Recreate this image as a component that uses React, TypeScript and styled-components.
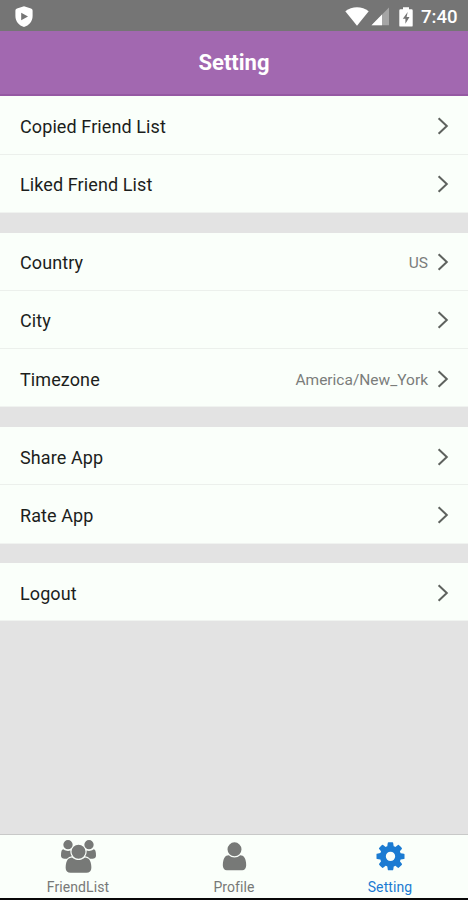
import React from "react";
import styled, { createGlobalStyle } from "styled-components";

const GlobalStyle = createGlobalStyle`
  * { box-sizing: border-box; }
  body { margin: 0; background: #e3e3e3; font-family: Roboto, "Liberation Sans", sans-serif; }
`;

const Screen = styled.div`
  display: flex;
  flex-direction: column;
  width: 468px;
  height: 900px;
  background: #e3e3e3;
  border-bottom: 2px solid #080808;
  overflow: hidden;
`;

const StatusBar = styled.div`
  display: flex;
  flex: none;
  align-items: center;
  height: 31px;
  padding: 2px 10px 0 15px;
  background: #757575;
  color: #fff;
`;

const StatusIcons = styled.div`
  display: flex;
  align-items: center;
  margin-left: auto;
`;

const Wifi = styled.svg`
  width: 24px;
  height: 19px;
`;

const Signal = styled.svg`
  width: 18px;
  height: 19px;
  margin-left: 2.5px;
`;

const Battery = styled.svg`
  width: 14px;
  height: 20px;
  margin-left: 10px;
`;

const Clock = styled.span`
  margin-left: 8px;
  width: 37px;
  font-size: 18.6px;
  line-height: 20px;
  font-weight: 500;
  white-space: nowrap;
`;

const Header = styled.header`
  display: flex;
  flex: none;
  align-items: center;
  justify-content: center;
  height: 65px;
  background: #a268b0;
  border-bottom: 2px solid #9559a3;
`;

const Title = styled.h1`
  margin: 0;
  color: #fff;
  font-size: 22px;
  line-height: 26px;
  font-weight: 700;
`;

const Content = styled.main`
  display: flex;
  flex: 1;
  flex-direction: column;
  gap: 19.7px;
  padding-top: 0.4px;
  background: linear-gradient(#fafffa 2px, #e3e3e3 2px);
`;

const Section = styled.section`
  background: #fafffa;
`;

const Row = styled.div`
  display: flex;
  align-items: center;
  height: 58.25px;
  padding: 4px 19.5px 0 20px;
  border-bottom: 1px solid #ecf0ec;
  &:last-child { border-bottom-color: #f0f3f0; }
`;

const Label = styled.span`
  flex: 1;
  color: #1c1e1c;
  font-size: 18px;
  line-height: 24px;
  letter-spacing: 0.1px;
`;

const Value = styled.span`
  margin-right: 8.5px;
  color: #7a7d7a;
  font-size: 15.5px;
  line-height: 22px;
`;

const Chevron = styled.svg`
  width: 12px;
  height: 18px;
  margin-top: -2px;
  fill: none;
  stroke: #5e625e;
  stroke-width: 2;
`;

const TabBar = styled.nav`
  display: grid;
  flex: none;
  grid-template-columns: repeat(3, 1fr);
  height: 64px;
  background: #fafffa;
  border-top: 1px solid #c8c9c8;
`;

const Tab = styled.div<{ $active?: boolean }>`
  display: flex;
  flex-direction: column;
  align-items: center;
  padding-top: 5px;
  color: ${(p) => (p.$active ? "#1b7bd2" : "#777977")};
`;

const TabIcon = styled.svg`
  width: 35px;
  height: 32.7px;
  fill: currentColor;
`;

const TabLabel = styled.span`
  margin-top: 4.8px;
  font-size: 14px;
  line-height: 20px;
  letter-spacing: 0.1px;
  color: inherit;
`;

const sections: { label: string; value?: string }[][] = [
  [{ label: "Copied Friend List" }, { label: "Liked Friend List" }],
  [
    { label: "Country", value: "US" },
    { label: "City" },
    { label: "Timezone", value: "America/New_York" },
  ],
  [{ label: "Share App" }, { label: "Rate App" }],
  [{ label: "Logout" }],
];

const tabs = [
  {
    label: "FriendList",
    viewBox: "0 0 1920 1792",
    path: "M593 896q-162 5-265 128h-134q-82 0-138-40.5t-56-118.5q0-353 124-353 6 0 43.5 21t97.5 42.5 119 21.5q67 0 133-23-5 37-5 66 0 139 81 256zm1071 637q0 120-73 189.5t-194 69.5h-874q-121 0-194-69.5t-73-189.5q0-53 3.5-103.5t14-109 26.5-108.5 43-97.5 62-81 85.5-53.5 111.5-20q10 0 43 21.5t73 48 107 48 135 21.5 135-21.5 107-48 73-48 43-21.5q61 0 111.5 20t85.5 53.5 62 81 43 97.5 26.5 108.5 14 109 3.5 103.5zm-1024-1277q0 106-75 181t-181 75-181-75-75-181 75-181 181-75 181 75 75 181zm704 384q0 159-112.5 271.5t-271.5 112.5-271.5-112.5-112.5-271.5 112.5-271.5 271.5-112.5 271.5 112.5 112.5 271.5zm576 225q0 78-56 118.5t-138 40.5h-134q-103-123-265-128 81-117 81-256 0-29-5-66 66 23 133 23 59 0 119-21.5t97.5-42.5 43.5-21q124 0 124 353zm-128-609q0 106-75 181t-181 75-181-75-75-181 75-181 181-75 181 75 75 181z",
  },
  {
    label: "Profile",
    viewBox: "0 0 1792 1792",
    path: "M1536 1399q0 109-62.5 187t-150.5 78h-854q-88 0-150.5-78t-62.5-187q0-85 8.5-160.5t31.5-152 58.5-131 94-89 134.5-34.5q131 128 313 128t313-128q76 0 134.5 34.5t94 89 58.5 131 31.5 152 8.5 160.5zm-256-887q0 159-112.5 271.5t-271.5 112.5-271.5-112.5-112.5-271.5 112.5-271.5 271.5-112.5 271.5 112.5 112.5 271.5z",
  },
  {
    label: "Setting",
    active: true,
    viewBox: "0 0 1792 1792",
    path: "M1152 896q0-106-75-181t-181-75-181 75-75 181 75 181 181 75 181-75 75-181zm512-109v222q0 12-8 23t-20 13l-185 28q-19 54-39 91 35 50 107 138 10 12 10 25t-9 23q-27 37-99 108t-94 71q-12 0-26-9l-138-108q-44 23-91 38-16 136-29 186-7 28-36 28h-222q-14 0-24.5-8.5t-11.5-21.5l-28-184q-49-16-90-37l-141 107q-10 9-25 9-14 0-25-11-126-114-165-168-7-10-7-23 0-12 8-23 15-21 51-66.5t54-70.5q-27-50-41-99l-183-27q-13-2-21-12.5t-8-23.5v-222q0-12 8-23t19-13l186-28q14-46 39-92-40-57-107-138-10-12-10-24 0-10 9-23 26-36 98.5-107.5t94.5-71.5q13 0 26 10l138 107q44-23 91-38 16-136 29-186 7-28 36-28h222q14 0 24.5 8.5t11.5 21.5l28 184q49 16 90 37l142-107q9-9 24-9 13 0 25 10 129 119 165 170 7 8 7 22 0 12-8 23-15 21-51 66.5t-54 70.5q26 50 41 98l183 28q13 2 21 12.5t8 23.5z",
  },
];

export default function App() {
  return (
    <>
      <GlobalStyle />
      <Screen>
        <StatusBar>
          <svg width="18" height="22" viewBox="0 0 18 22">
            <path
              fill="#fff"
              fillRule="evenodd"
              d="M9 0.3 L16 2.6 Q17.6 3.2 17.6 4.6 V10 C17.6 15.6 14 19.4 9 21 C4 19.4 0.4 15.6 0.4 10 V4.6 Q0.4 3.2 2 2.6 Z M6.2 6.8 V14.2 L13 10.5 Z"
            />
          </svg>
          <StatusIcons>
            <Wifi viewBox="0 0 24 19">
              <path fill="#fff" d="M0.3 4.2 C7 -1 17 -1 23.7 4.2 L12 18.7 Z" />
            </Wifi>
            <Signal viewBox="0 0 18 19">
              <path fill="#a5a5a5" d="M18 0.5 V18.3 H0.5 Z" />
              <path fill="#fff" d="M11 7.6 V18.3 H0.5 Z" />
            </Signal>
            <Battery viewBox="0 0 14 20">
              <path
                fill="#fff"
                fillRule="evenodd"
                d="M4 0.3 H10 V2.3 H12.5 Q13.7 2.3 13.7 3.5 V18.4 Q13.7 19.6 12.5 19.6 H1.5 Q0.3 19.6 0.3 18.4 V3.5 Q0.3 2.3 1.5 2.3 H4 Z M8.7 5 L3.8 11.8 H6.4 V16.8 L10.5 10 H7.6 Z"
              />
            </Battery>
            <Clock>7:40</Clock>
          </StatusIcons>
        </StatusBar>
        <Header>
          <Title>Setting</Title>
        </Header>
        <Content>
          {sections.map((rows) => (
            <Section key={rows[0].label}>
              {rows.map((row) => (
                <Row key={row.label}>
                  <Label>{row.label}</Label>
                  {row.value && <Value>{row.value}</Value>}
                  <Chevron viewBox="0 0 12 18">
                    <path d="M1.6 1.2 L9.8 9 L1.6 16.8" />
                  </Chevron>
                </Row>
              ))}
            </Section>
          ))}
        </Content>
        <TabBar>
          {tabs.map((tab) => (
            <Tab key={tab.label} $active={tab.active}>
              <TabIcon viewBox={tab.viewBox}>
                <path d={tab.path} />
              </TabIcon>
              <TabLabel>{tab.label}</TabLabel>
            </Tab>
          ))}
        </TabBar>
      </Screen>
    </>
  );
}
